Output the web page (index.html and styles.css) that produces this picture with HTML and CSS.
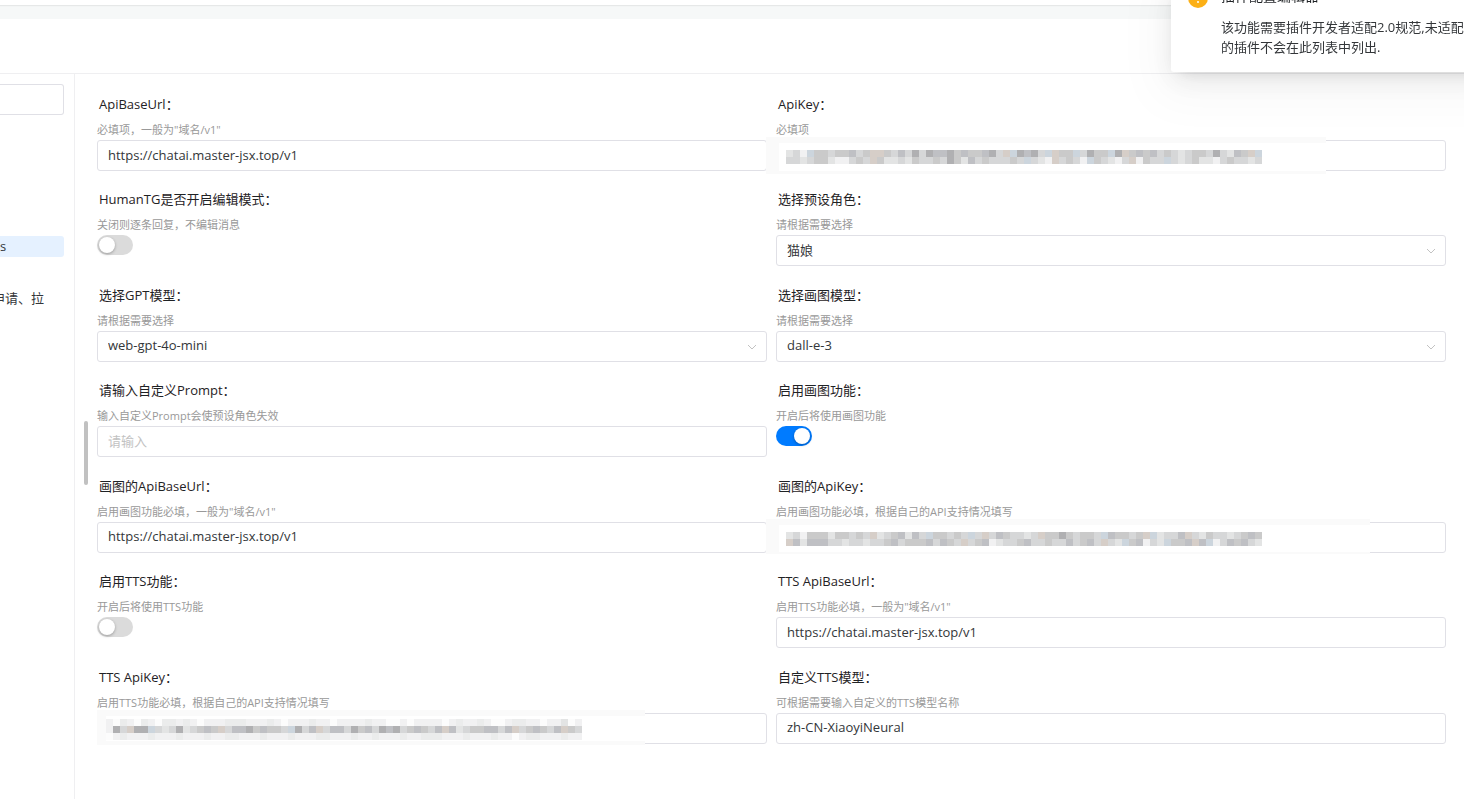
FILE: index.html
```html
<!DOCTYPE html>
<html lang="zh-CN">

<head>
    <meta charset="UTF-8">
    <meta name="viewport" content="width=device-width, initial-scale=1.0">
    <title>插件配置编辑器</title>
    <link rel="stylesheet" href="styles.css">
</head>

<body>
    <header class="topbar"></header>
    <div class="page">
        <div class="card-header"></div>
        <div class="card-body">
            <aside class="sidebar">
                <input class="control" type="text" aria-label="搜索">
                <a class="plugin active" href="#">s</a>
                <p class="plugin-desc">申请、拉</p>
            </aside>

            <main class="content">
                <div class="scrollbar"></div>
                <form class="config-grid">
                    <div class="field">
                        <label for="api-base">ApiBaseUrl：</label>
                        <p class="hint">必填项，一般为"域名/v1"</p>
                        <input class="control" id="api-base" type="text" value="https://chatai.master-jsx.top/v1">
                    </div>
                    <div class="field">
                        <label for="api-key">ApiKey：</label>
                        <p class="hint">必填项</p>
                        <div class="control-wrap">
                            <input class="control" id="api-key" type="text">
                            <div class="mask mask-api"><svg data-mosaic="api"></svg></div>
                        </div>
                    </div>

                    <div class="field">
                        <label for="edit-mode">HumanTG是否开启编辑模式：</label>
                        <p class="hint">关闭则逐条回复，不编辑消息</p>
                        <input class="switch" id="edit-mode" type="checkbox">
                    </div>
                    <div class="field">
                        <label for="role">选择预设角色：</label>
                        <p class="hint">请根据需要选择</p>
                        <div class="control-wrap">
                            <select class="control" id="role">
                                <option>猫娘</option>
                            </select>
                            <svg class="arrow" viewBox="0 0 10 6"><path d="M1 1l4 4 4-4" /></svg>
                        </div>
                    </div>

                    <div class="field">
                        <label for="gpt-model">选择GPT模型：</label>
                        <p class="hint">请根据需要选择</p>
                        <div class="control-wrap">
                            <select class="control" id="gpt-model">
                                <option>web-gpt-4o-mini</option>
                            </select>
                            <svg class="arrow" viewBox="0 0 10 6"><path d="M1 1l4 4 4-4" /></svg>
                        </div>
                    </div>
                    <div class="field">
                        <label for="draw-model">选择画图模型：</label>
                        <p class="hint">请根据需要选择</p>
                        <div class="control-wrap">
                            <select class="control" id="draw-model">
                                <option>dall-e-3</option>
                            </select>
                            <svg class="arrow" viewBox="0 0 10 6"><path d="M1 1l4 4 4-4" /></svg>
                        </div>
                    </div>

                    <div class="field">
                        <label for="prompt">请输入自定义Prompt：</label>
                        <p class="hint">输入自定义Prompt会使预设角色失效</p>
                        <input class="control" id="prompt" type="text" placeholder="请输入">
                    </div>
                    <div class="field">
                        <label for="draw-on">启用画图功能：</label>
                        <p class="hint">开启后将使用画图功能</p>
                        <input class="switch" id="draw-on" type="checkbox" checked>
                    </div>

                    <div class="field">
                        <label for="draw-base">画图的ApiBaseUrl：</label>
                        <p class="hint">启用画图功能必填，一般为"域名/v1"</p>
                        <input class="control" id="draw-base" type="text" value="https://chatai.master-jsx.top/v1">
                    </div>
                    <div class="field">
                        <label for="draw-key">画图的ApiKey：</label>
                        <p class="hint">启用画图功能必填，根据自己的API支持情况填写</p>
                        <div class="control-wrap">
                            <input class="control" id="draw-key" type="text">
                            <div class="mask mask-draw"><svg data-mosaic="draw"></svg></div>
                        </div>
                    </div>

                    <div class="field">
                        <label for="tts-on">启用TTS功能：</label>
                        <p class="hint">开启后将使用TTS功能</p>
                        <input class="switch" id="tts-on" type="checkbox">
                    </div>
                    <div class="field">
                        <label for="tts-base">TTS ApiBaseUrl：</label>
                        <p class="hint">启用TTS功能必填，一般为"域名/v1"</p>
                        <input class="control" id="tts-base" type="text" value="https://chatai.master-jsx.top/v1">
                    </div>

                    <div class="field">
                        <label for="tts-key">TTS ApiKey：</label>
                        <p class="hint">启用TTS功能必填，根据自己的API支持情况填写</p>
                        <div class="control-wrap">
                            <input class="control" id="tts-key" type="text">
                            <div class="mask mask-tts"><svg data-mosaic="tts"></svg></div>
                        </div>
                    </div>
                    <div class="field">
                        <label for="tts-model">自定义TTS模型：</label>
                        <p class="hint">可根据需要输入自定义的TTS模型名称</p>
                        <input class="control" id="tts-model" type="text" value="zh-CN-XiaoyiNeural">
                    </div>
                </form>
            </main>
        </div>
    </div>

    <div class="notification">
        <svg class="notification-icon" viewBox="0 0 20 20">
            <circle cx="10" cy="10" r="10" fill="#fcb016" />
            <path d="M10 5v6" stroke="#fff" stroke-width="2" />
            <circle cx="10" cy="14" r="1" fill="#fff" />
        </svg>
        <div>
            <h3>插件配置编辑器</h3>
            <p>该功能需要插件开发者适配2.0规范,未适配完<br>的插件不会在此列表中列出.</p>
        </div>
    </div>

    <script src="mosaic.js"></script>
</body>

</html>
```
FILE: styles.css
```css
* {
    margin: 0;
    padding: 0;
    box-sizing: border-box;
}

body {
    display: flex;
    flex-direction: column;
    min-height: 100vh;
    overflow: hidden;
    background: #f6f8f8;
    font-family: 'Open Sans', 'Noto Sans CJK SC', sans-serif;
    font-size: 13px;
    color: #333639;
}

.topbar {
    height: 5px;
    background: #fff;
    box-shadow: 0 1px 1px #e6e8e8;
}

.page {
    display: flex;
    flex-direction: column;
    flex: 1;
    margin-top: 14px;
    background: #fff;
}

.card-header {
    height: 55px;
    border-bottom: 1px solid #efeff1;
}

.card-body {
    display: flex;
    flex: 1;
}

.sidebar {
    width: 75px;
    padding: 10px 10px 0 0;
    border-right: 1px solid #efeff1;
    overflow: hidden;
}

.sidebar .control {
    border-left: 0;
    border-radius: 0 3px 3px 0;
}

.plugin {
    display: block;
    height: 21px;
    margin-top: 121px;
    line-height: 20px;
    background: #e5f1ff;
    border-radius: 0 3px 3px 0;
    color: #333639;
    text-decoration: none;
}

.plugin-desc {
    margin: 31px 0 0 -8px;
    line-height: 20px;
    white-space: nowrap;
}

.content {
    position: relative;
    display: flex;
    flex: 1;
    padding: 18px 18px 39px 22px;
}

.scrollbar {
    position: absolute;
    left: 9px;
    top: 347px;
    width: 4px;
    height: 64px;
    border-radius: 2px;
    background: #c1c1c1;
}

.config-grid {
    display: grid;
    flex: 1;
    grid-template-columns: 1fr 1fr;
    grid-auto-rows: 1fr;
    column-gap: 9px;
}

.field label {
    display: block;
    height: 24px;
    padding-left: 2px;
    line-height: 24px;
    color: #1f2225;
}

.hint {
    height: 24px;
    line-height: 27px;
    font-size: 11px;
    color: #999;
}

.control {
    display: block;
    width: 100%;
    height: 31px;
    padding: 0 10px 2px;
    border: 1px solid #e0e0e6;
    border-radius: 3px;
    background: #fff;
    font: inherit;
    color: #333639;
    appearance: none;
    outline: none;
}

.control::placeholder {
    color: #c2c2c2;
}

.control-wrap {
    position: relative;
}

.arrow {
    position: absolute;
    right: 10px;
    top: 13px;
    width: 10px;
    height: 6px;
    fill: none;
    stroke: #c2c2c2;
    pointer-events: none;
}

.switch {
    display: block;
    width: 36px;
    height: 20px;
    padding: 2px;
    border-radius: 10px;
    background: #dbdbdb;
    appearance: none;
}

.switch::before {
    content: '';
    display: block;
    width: 16px;
    height: 16px;
    border-radius: 50%;
    background: #fff;
    box-shadow: 0 1px 3px rgba(0, 0, 0, 0.3);
}

.switch:checked {
    background: #007bff;
}

.switch:checked::before {
    margin-left: 16px;
}

/* pixelated cover over the secret keys */
.mask {
    position: absolute;
    top: -3px;
    background: #fff;
    border: 0 solid #fafafa;
}

.mask svg {
    display: block;
    shape-rendering: crispEdges;
}

.mask-api {
    left: -10px;
    width: 560px;
    height: 37px;
    padding: 7px;
    border-width: 6px 0 3px 13px;
}

.mask-draw {
    left: -10px;
    width: 604px;
    height: 35px;
    padding: 7px;
    border-width: 6px 0 2px 13px;
}

.mask-tts {
    left: 0;
    width: 548px;
    height: 35px;
    padding: 3px 0;
    border-width: 6px 0 4px 9px;
}

.notification {
    position: fixed;
    right: -36px;
    top: -20px;
    display: flex;
    gap: 13px;
    width: 329px;
    height: 92px;
    padding: 8px 17px;
    border-radius: 3px;
    background: #fff;
    box-shadow: 0 6px 16px -9px rgba(0, 0, 0, 0.16), 0 9px 28px rgba(0, 0, 0, 0.08), 0 12px 48px 16px rgba(0, 0, 0, 0.03);
    white-space: nowrap;
}

.notification-icon {
    flex: none;
    width: 20px;
    height: 20px;
}

.notification h3 {
    line-height: 16px;
    font-size: 14px;
    font-weight: 400;
    color: #1f2225;
}

.notification p {
    margin-top: 13px;
    line-height: 20px;
}
```
FILE: mosaic.js
```javascript
const CELL = 7;

const palette = {
    a: '#b0b0b2', b: '#bfc0c4', c: '#cacaca', d: '#d6d7d8',
    e: '#e3e4e4', f: '#f1f1f2', g: '#ebecec', s: '#ccd5dd', t: '#d6cec8', w: '#fcfcfc'
};

const mosaics = {
    api: [
        'edfsccdccbdcttcdbdadabbacbccbadtsabadstccsdaccsatcbcbdcdedccdadebcts',
        'ddedcceffdcdtceedecddcdacebdcdddcdsdeftdcdfscdefdtfcddsdedceefdcdded'
    ],
    draw: [
        'edfccceccdcdtedcbebdsccdcdsdtdbcddedtccacdccdsbccdctseddbtdecddedcbc',
        'tbebbbddeddeddcbdcccbdbcdtdcbfeddcbddcddbdcbdtdescbfdesccbtbsfdbcbde'
    ],
    tts: [
        'fwgfwgfwggfgfwfffgggfffgfwfffgffwffffgffwwfwffffwfgffgfwwfggffwffewf',
        'fadtaasdedaedcbctdbbacbccdsadbtdbbdacbdabadcbcdbtbedccbbdbtdcbcdbtcd',
        'wfgfffgfffgfffgffggfffgfffgfffggfffgffgfffgffgggfffgfffgffwfggfffgff'
    ]
};

document.querySelectorAll('[data-mosaic]').forEach(svg => {
    const rows = mosaics[svg.dataset.mosaic];
    svg.setAttribute('width', rows[0].length * CELL);
    svg.setAttribute('height', rows.length * CELL);
    svg.innerHTML = rows.map((row, y) => [...row].map((key, x) =>
        `<rect x="${x * CELL}" y="${y * CELL}" width="${CELL}" height="${CELL}" fill="${palette[key]}"/>`
    ).join('')).join('');
});
```
